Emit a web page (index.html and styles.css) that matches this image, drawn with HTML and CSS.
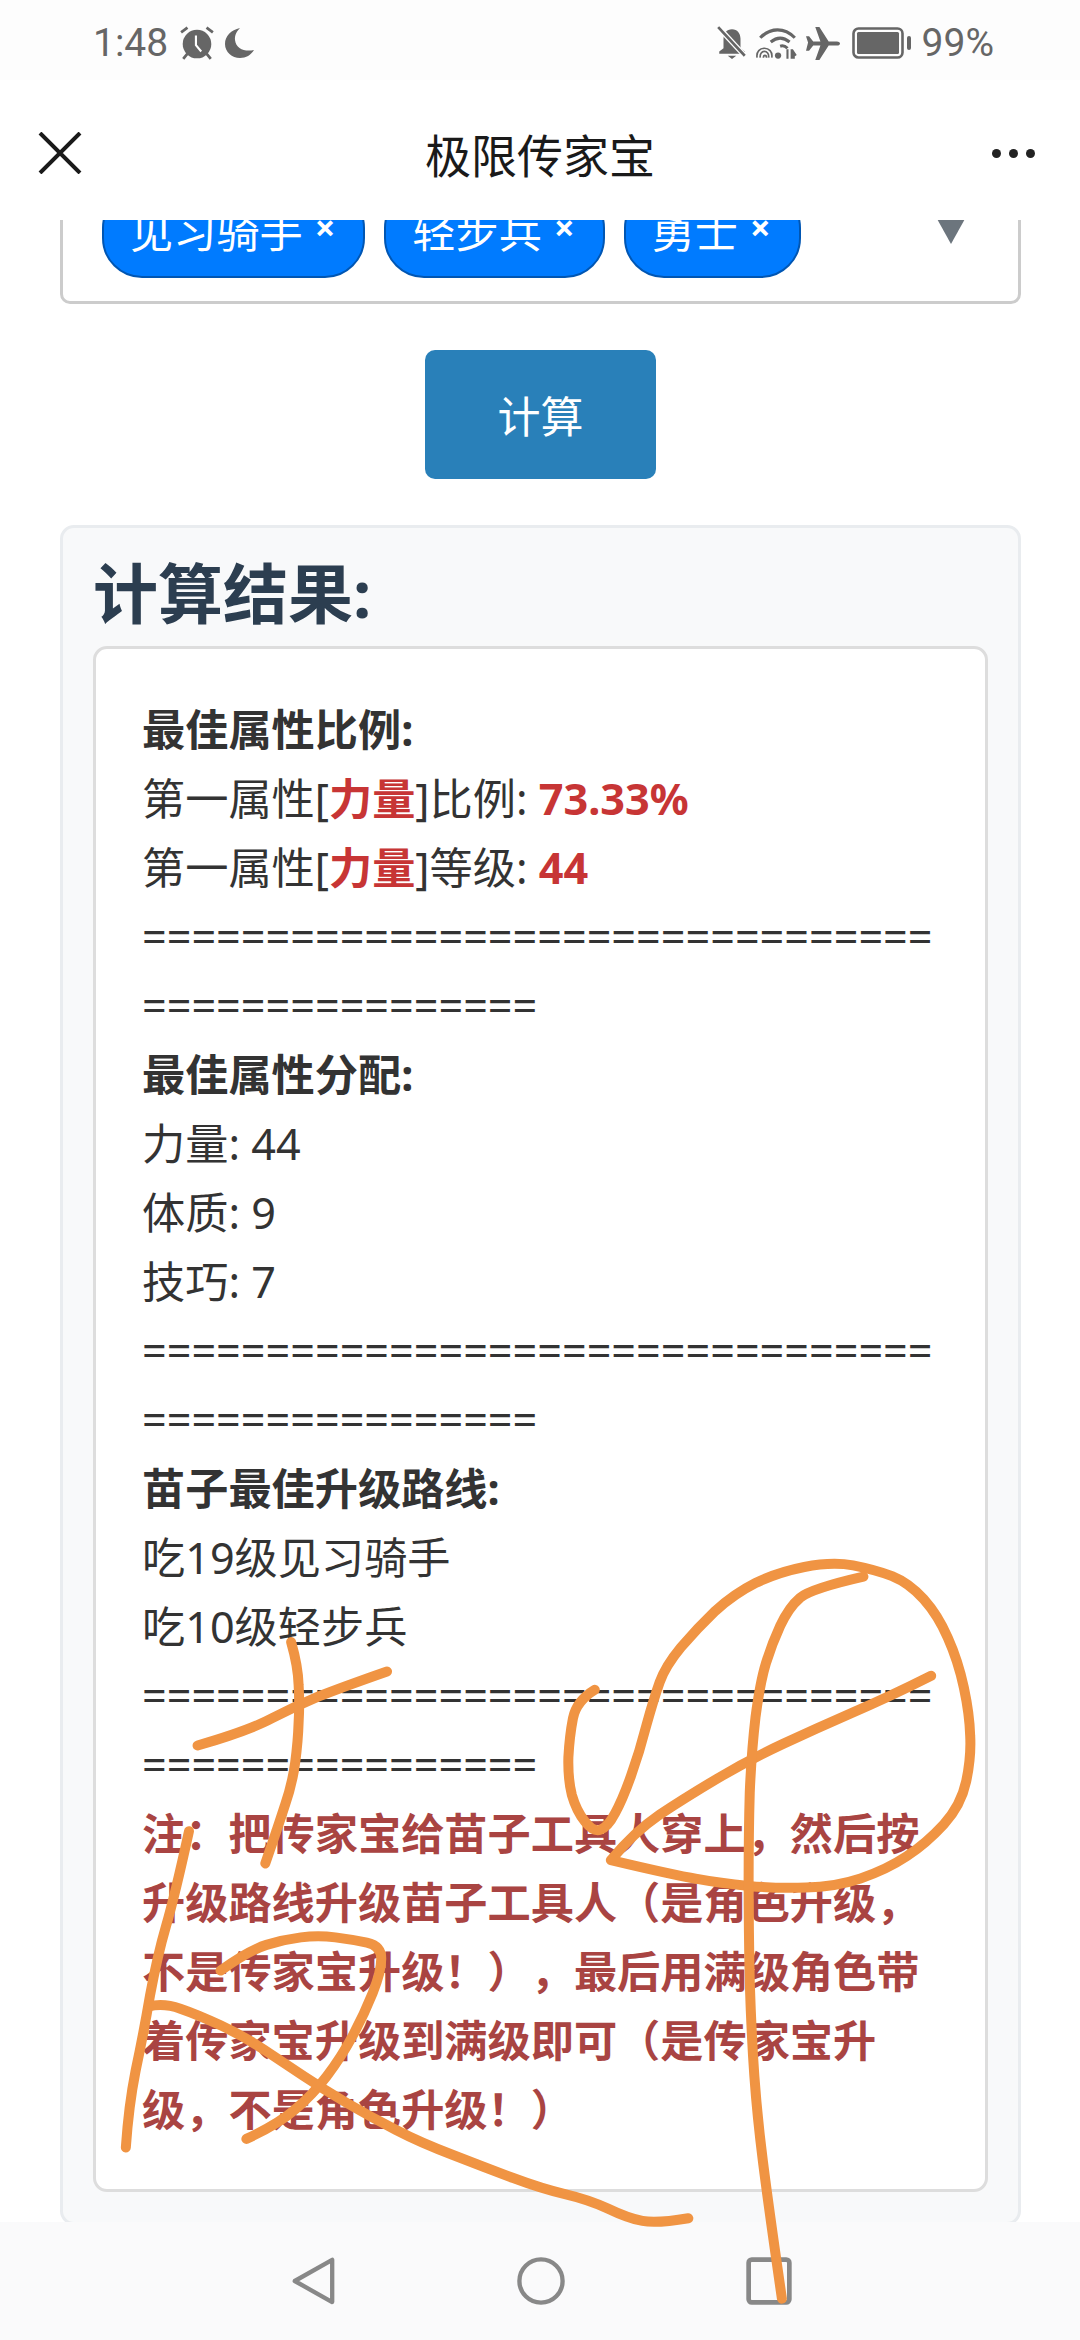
FILE: index.html
```html
<!DOCTYPE html>
<html lang="zh-CN">
<head>
    <meta charset="UTF-8">
    <meta name="viewport" content="width=device-width, initial-scale=1.0">
    <title>极限传家宝</title>
    <link rel="stylesheet" href="styles.css">
</head>
<body>
    <div class="page">
        <div class="status-bar">
            <div class="status-group">
                <span class="status-text">1:48</span>
                <svg class="alarm-icon" viewBox="0 0 34 32">
                    <circle cx="17" cy="17" r="13.5" fill="#666"/>
                    <path d="M16 9v9l5 6" fill="none" stroke="#fff" stroke-width="2"/>
                    <path d="M2 6l6-4.5M32 6l-6-4.5M8 26l-4 5M26 26l4 5" fill="none" stroke="#666" stroke-width="2.6"/>
                </svg>
                <svg class="moon-icon" viewBox="0 0 30 32">
                    <path d="M15 1C6 3 0 9 0 17c0 8 7 14 15 14 6 0 11-3 14-8-9 2-18-1-19-10-.5-5 2-9 5-12z" fill="#666"/>
                </svg>
            </div>
            <div class="status-group">
                <svg class="bell-icon" viewBox="0 0 28 32">
                    <path d="M14 3c-5 0-8 4-8 9v9l-4 3v2h24v-2l-4-3v-9c0-5-3-9-8-9zM10 28h8l-4 3z" fill="#666"/>
                    <path d="M1 1l25 27" stroke="#fff" stroke-width="5"/>
                    <path d="M1 1l25 27" stroke="#666" stroke-width="2.5"/>
                </svg>
                <svg class="wifi-icon" viewBox="0 0 42 32">
                    <path d="M5 11C15 1 28 1 38 11M15 15c6-5 12-5 18 0M24 19c3-1 5 0 7 2" fill="none" stroke="#666" stroke-width="3"/>
                    <path d="M2 30c-2-12 16-12 14 0M5 30c-1-8 9-8 8 0M8 30c0-3 3-3 3 0" fill="none" stroke="#666" stroke-width="1.6"/>
                    <circle cx="22" cy="28" r="3" fill="#666"/>
                    <path d="M31 22v9M35 31v-9M39 28l-2-3v6" fill="none" stroke="#666" stroke-width="2"/>
                </svg>
                <svg class="plane-icon" viewBox="0 0 33 32">
                    <path d="M0 9l3 0 4 5h7L9 0h4l9 14h8c4 0 4 4 0 4h-8l-9 14H9l5-14H7l-4 5H0l2-8z" fill="#666"/>
                </svg>
                <svg class="battery-icon" viewBox="0 0 60 32">
                    <rect x="1.5" y="1.5" width="49" height="29" rx="5" fill="none" stroke="#666" stroke-width="2.6"/>
                    <rect x="5" y="5" width="42" height="22" rx="1.5" fill="#666"/>
                    <rect x="55" y="9" width="4" height="14" rx="2" fill="#666"/>
                </svg>
                <span class="status-text">99%</span>
            </div>
        </div>

        <div class="app-header">
            <svg class="close-icon" viewBox="0 0 44 42">
                <path d="M2 1l40 40M42 1L2 41" fill="none" stroke="#1a1a1a" stroke-width="4"/>
            </svg>
            <h1 class="app-title">极限传家宝</h1>
            <div class="more-dots"><i></i><i></i><i></i></div>
        </div>

        <div class="web-view">
            <div class="select-box">
                <span class="chip">见习骑手 <b>×</b></span>
                <span class="chip">轻步兵 <b>×</b></span>
                <span class="chip">勇士 <b>×</b></span>
                <span class="select-arrow"></span>
            </div>

            <button class="calc-btn">计算</button>

            <div class="result-card">
                <h3>计算结果:</h3>
                <div class="result-body">
                    <p><strong>最佳属性比例:</strong></p>
                    <p>第一属性[<strong class="hl">力量</strong>]比例: <strong class="hl">73.33%</strong></p>
                    <p>第一属性[<strong class="hl">力量</strong>]等级: <strong class="hl">44</strong></p>
                    <p class="divider">================================================</p>
                    <p><strong>最佳属性分配:</strong></p>
                    <p>力量: 44</p>
                    <p>体质: 9</p>
                    <p>技巧: 7</p>
                    <p class="divider">================================================</p>
                    <p><strong>苗子最佳升级路线:</strong></p>
                    <p>吃19级见习骑手</p>
                    <p>吃10级轻步兵</p>
                    <p class="divider">================================================</p>
                    <p class="note">注：把传家宝给苗子工具人穿上，然后按升级路线升级苗子工具人（是角色升级，不是传家宝升级！），最后用满级角色带着传家宝升级到满级即可（是传家宝升级，不是角色升级！）</p>
                </div>
            </div>
        </div>

        <div class="nav-bar">
            <svg class="nav-back" viewBox="0 0 44 50">
                <path d="M42 3v44L3 25z" fill="none" stroke="#888" stroke-width="4.5" stroke-linejoin="round"/>
            </svg>
            <svg class="nav-home" viewBox="0 0 50 50">
                <circle cx="25" cy="25" r="22.5" fill="none" stroke="#888" stroke-width="4.5"/>
            </svg>
            <svg class="nav-recent" viewBox="0 0 44 46">
                <rect x="2.5" y="2.5" width="39" height="41" rx="3" fill="none" stroke="#888" stroke-width="4.5"/>
            </svg>
        </div>

        <!-- hand drawn scribble on top of the screenshot -->
        <svg class="scribble" viewBox="0 0 1080 2340">
            <g transform="translate(100 1500) scale(.574 .536)">
                <path d="M170 458Q260 430 300 407Q340 385 380 367Q420 350 500 320"/>
                <path d="M333 265Q345 310 346 345Q348 380 346 415Q345 450 340 490Q335 530 322 570Q310 610 288 678"/>
                <path d="M155 618Q130 740 115 795Q100 850 87 925Q75 1000 62 1065Q50 1130 45 1208"/>
                <path d="M210 878Q260 840 290 830Q320 820 350 816Q380 812 410 816Q440 820 465 826Q490 832 490 856Q490 880 475 920Q460 960 440 1000Q420 1040 395 1075Q370 1110 340 1137Q310 1165 255 1192"/>
                <path d="M85 945Q110 938 140 949Q170 960 210 980Q250 1000 285 1025Q320 1050 355 1075Q390 1100 430 1125Q470 1150 515 1175Q560 1200 615 1222Q670 1245 720 1265Q770 1285 810 1295Q850 1305 885 1322Q920 1340 945 1345Q970 1350 1025 1340"/>
                <path d="M862 354Q830 375 824 407Q818 440 816 480Q815 520 822 550Q830 580 845 600Q860 620 872 615Q885 610 897 585Q910 560 925 515Q940 470 952 420Q965 370 975 340Q985 310 1012 275Q1040 240 1072 207Q1105 175 1142 155Q1180 135 1227 125Q1275 115 1312 122Q1350 130 1380 142Q1410 155 1435 185Q1460 215 1477 257Q1495 300 1505 350Q1515 400 1516 440Q1518 480 1509 525Q1500 570 1470 605Q1440 640 1405 665Q1370 690 1325 706Q1280 722 1230 723Q1180 725 1130 720Q1080 715 1040 707Q1000 700 890 672Q930 620 975 587Q1020 555 1075 520Q1130 485 1190 455Q1250 425 1310 397Q1370 370 1448 328"/>
                <path d="M1330 143Q1240 165 1220 182Q1200 200 1185 235Q1170 270 1160 305Q1150 340 1142 405Q1135 470 1132 545Q1130 620 1130 710Q1130 800 1132 900Q1135 1000 1140 1075Q1145 1150 1155 1235Q1165 1320 1188 1490"/>
            </g>
        </svg>
    </div>
</body>
</html>
```

FILE: styles.css
```css
* {
    box-sizing: border-box;
}
body {
    margin: 0;
    font-family: "Noto Sans", "Noto Sans CJK SC", sans-serif;
    background-color: white;
}
.page {
    position: relative;
    display: flex;
    flex-direction: column;
    width: 1080px;
    height: 2340px;
    overflow: hidden;
    background-color: white;
}
.status-bar {
    display: flex;
    justify-content: space-between;
    align-items: center;
    flex: none;
    height: 80px;
    padding: 6px 86px 0 93px;
    background-color: #fdfdfd;
}
.status-group {
    display: flex;
    align-items: center;
    gap: 8px;
}
.status-text {
    font-family: Roboto, sans-serif;
    font-size: 39px;
    color: #666;
}
.alarm-icon { width: 36px; height: 34px; margin-left: 3px; }
.moon-icon { width: 30px; height: 32px; margin-left: 2px; }
.bell-icon { width: 30px; height: 34px; }
.wifi-icon { width: 44px; height: 34px; }
.plane-icon { width: 34px; height: 33px; margin-left: -1px; }
.battery-icon { width: 60px; height: 32px; margin: 0 2px 0 4px; }
.app-header {
    display: flex;
    justify-content: space-between;
    align-items: center;
    flex: none;
    height: 140px;
    padding: 6px 45px 0 38px;
    background-color: white;
}
.close-icon {
    width: 44px;
    height: 42px;
}
.app-title {
    margin: 0 0 0 6px;
    font-size: 46px;
    font-weight: 400;
    color: #1a1a1a;
}
.more-dots {
    display: flex;
    gap: 8px;
}
.more-dots i {
    width: 9px;
    height: 9px;
    border-radius: 50%;
    background-color: #222;
}
.web-view {
    flex: 1;
    min-height: 0;
    overflow: hidden;
    padding: 0 59px 0 60px;
}
.select-box {
    position: relative;
    display: flex;
    align-items: flex-end;
    gap: 19px;
    height: 121px;
    margin-top: -37px;
    padding: 0 39px 23px;
    border: 3px solid #ccc;
    border-radius: 10px;
}
.chip {
    display: flex;
    align-items: center;
    gap: 12px;
    height: 90px;
    padding: 0 28px 7px 26px;
    font-size: 43.2px;
    color: white;
    background-color: #007bff;
    border: 2px solid #0056b3;
    border-radius: 40px;
}
.chip b {
    font-size: 36px;
    margin-bottom: 4px;
}
.select-arrow {
    position: absolute;
    right: 52px;
    top: 31px;
    border-top: 27px solid #6c757d;
    border-left: 15px solid transparent;
    border-right: 15px solid transparent;
}
.calc-btn {
    display: block;
    width: 231px;
    height: 129px;
    margin: 46px auto 0;
    padding: 0;
    font-family: inherit;
    font-size: 43px;
    color: white;
    background-color: #2980b9;
    border: none;
    border-radius: 10px;
}
.result-card {
    margin-top: 46px;
    padding: 20px 30px 30px;
    background-color: #f8f9fa;
    border: 3px solid #e9ecef;
    border-radius: 14px;
}
.result-card h3 {
    margin: 0 0 8px;
    font-size: 65px;
    line-height: 90px;
    font-weight: 700;
    color: #2c3e50;
}
.result-body {
    padding: 46px 46px 45px;
    background-color: white;
    border: 3px solid #ddd;
    border-radius: 14px;
    font-size: 43.2px;
    line-height: 69px;
    color: #333;
}
.result-body p {
    margin: 0;
}
.divider {
    word-break: break-all;
}
.hl {
    color: #c73535;
}
.note {
    font-weight: 700;
    color: #a94442;
    text-spacing-trim: space-all;
}
.nav-bar {
    display: flex;
    justify-content: center;
    align-items: center;
    gap: 181px;
    flex: none;
    height: 118px;
    padding-left: 2px;
    background-color: #fafafb;
}
.nav-back { width: 46px; height: 48px; }
.nav-home { width: 48px; height: 48px; }
.nav-recent { width: 46px; height: 48px; }
.scribble {
    position: absolute;
    left: 0;
    top: 0;
    width: 1080px;
    height: 2340px;
    pointer-events: none;
}
.scribble path {
    fill: none;
    stroke: #f09443;
    stroke-width: 10px;
    stroke-linecap: round;
    stroke-linejoin: round;
    vector-effect: non-scaling-stroke;
}
```
